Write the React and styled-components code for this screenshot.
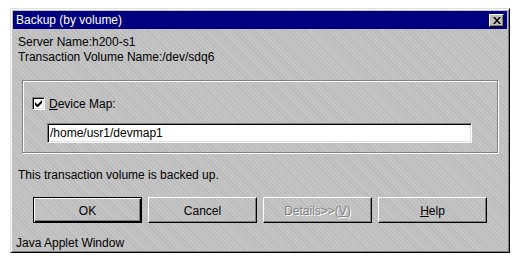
import React from "react";
import styled, { createGlobalStyle } from "styled-components";

const Global = createGlobalStyle`
  html, body { margin: 0; padding: 0; background: #ffffff; }
  body { font-family: "Liberation Sans", Arial, sans-serif; font-size: 12px; }
`;

const pattern = `repeating-linear-gradient(45deg, #c6c6c6 0px, #c6c6c6 1px, #b9b9b9 1px, #b9b9b9 2px, #c3c3c3 2px, #c3c3c3 3px)`;

const Frame = styled.div`
  box-sizing: border-box;
  margin: 8px 0 0 10px;
  width: 500px;
  height: 245px;
  border: 1px solid;
  border-color: #dfdfdf #000 #000 #dfdfdf;
  box-shadow: inset 1px 1px #fff, inset -1px -1px #808080;
  padding: 2px;
  background: ${pattern};
  display: flex;
  flex-direction: column;
`;

const TitleBar = styled.div`
  height: 18px;
  background: #000080;
  color: #fff;
  display: flex;
  align-items: center;
  justify-content: space-between;
  padding: 0 3px;
  line-height: 18px;
`;

const TitleText = styled.span`
  font-size: 12px;
`;

const CloseBtn = styled.div`
  box-sizing: border-box;
  width: 15px;
  height: 13px;
  background: #c0c0c0;
  border: 1px solid;
  border-color: #fff #000 #000 #fff;
  box-shadow: inset -1px -1px #808080;
  display: flex;
  align-items: center;
  justify-content: center;
`;

const Body = styled.div`
  flex: 1;
  padding: 6px 0 0 5px;
  display: flex;
  flex-direction: column;
  color: #000;
`;

const Line = styled.div`
  height: 15px;
  line-height: 15px;
  white-space: nowrap;
  margin-left: ${p => p.$indent || 0}px;
  margin-top: ${p => p.$top || 0}px;
`;

const Group = styled.div`
  box-sizing: border-box;
  margin: 15px 0 0 4px;
  width: 476px;
  height: 73px;
  border: 1px solid #808080;
  box-shadow: inset 1px 1px #fff, 1px 1px #fff;
  padding: 16px 0 0 9px;
  display: flex;
  flex-direction: column;
`;

const CheckRow = styled.div`
  display: flex;
  align-items: center;
  height: 13px;
  gap: 4px;
`;

const CheckBox = styled.div`
  box-sizing: border-box;
  width: 13px;
  height: 13px;
  background: #fff;
  border: 1px solid;
  border-color: #808080 #fff #fff #808080;
  box-shadow: inset 1px 1px #000, inset -1px -1px #dfdfdf;
  display: flex;
  align-items: center;
  justify-content: center;
`;

const Label = styled.span`
  line-height: 13px;
  margin-top: 1px;
`;

const Field = styled.div`
  box-sizing: border-box;
  margin: 13px 0 0 15px;
  width: 425px;
  height: 20px;
  background: #fff;
  border: 1px solid;
  border-color: #808080 #fff #fff #808080;
  box-shadow: inset 1px 1px #000, inset -1px -1px #dfdfdf;
  padding: 0 0 0 2px;
  line-height: 18px;
`;

const ButtonRow = styled.div`
  display: flex;
  gap: 6px;
  margin: 14px 0 0 15px;
`;

const Button = styled.div`
  box-sizing: border-box;
  width: 109px;
  height: 26px;
  display: flex;
  align-items: center;
  justify-content: center;
  background: transparent;
  border: 1px solid;
  border-color: ${p => (p.$default ? "#000" : "#fff #000 #000 #fff")};
  box-shadow: ${p =>
    p.$default
      ? "inset 1px 1px #fff, inset -1px -1px #000, inset -2px -2px #808080"
      : "inset -1px -1px #808080"};
  color: ${p => (p.$disabled ? "#808080" : "#000")};
  text-shadow: ${p => (p.$disabled ? "1px 1px #fff" : "none")};
  padding-top: 1px;
`;

const App = () => (
  <>
    <Global />
    <Frame>
      <TitleBar>
        <TitleText>Backup (by volume)</TitleText>
        <CloseBtn>
          <svg width="8" height="7" viewBox="0 0 8 7">
            <path d="M0 0h2l2 2.5L6 0h2L5 3.5 8 7H6L4 4.5 2 7H0l3-3.5z" fill="#000" />
          </svg>
        </CloseBtn>
      </TitleBar>
      <Body>
        <Line>Server Name:h200-s1</Line>
        <Line>Transaction Volume Name:/dev/sdq6</Line>
        <Group>
          <CheckRow>
            <CheckBox>
              <svg width="7" height="7" viewBox="0 0 7 7">
                <path d="M0 2v3l2 2h1l4-4V0L2.5 4.5z" fill="#000" />
              </svg>
            </CheckBox>
            <Label>
              <u>D</u>evice Map:
            </Label>
          </CheckRow>
          <Field>/home/usr1/devmap1</Field>
        </Group>
        <Line $top={15}>This transaction volume is backed up.</Line>
        <ButtonRow>
          <Button $default>OK</Button>
          <Button>Cancel</Button>
          <Button $disabled>
            Details&gt;&gt;(<u>V</u>)
          </Button>
          <Button>
            <u>H</u>elp
          </Button>
        </ButtonRow>
        <Line $top={13} $indent={-2}>Java Applet Window</Line>
      </Body>
    </Frame>
  </>
);

export default App;
